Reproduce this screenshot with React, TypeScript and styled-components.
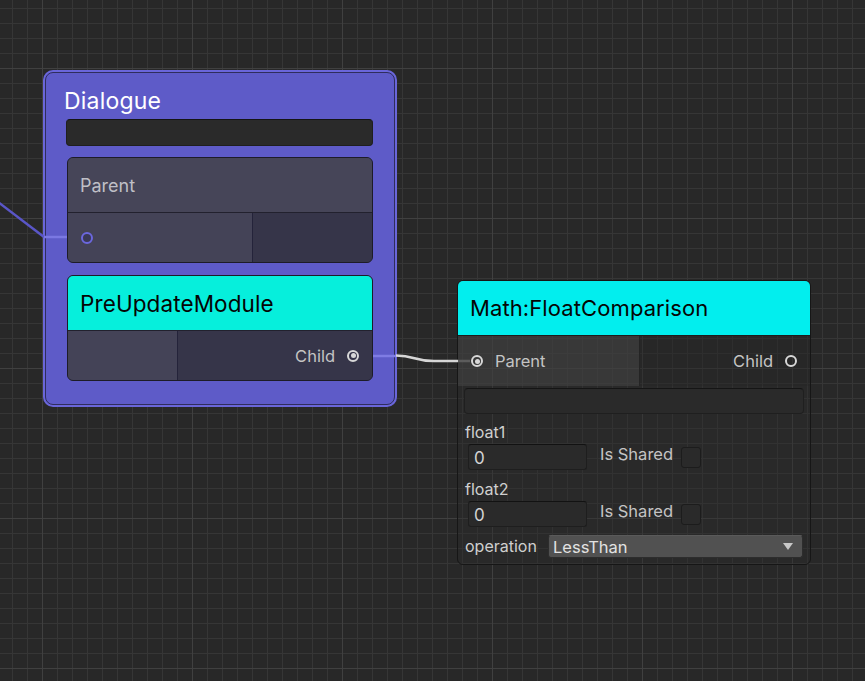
import React from "react";
import styled, { createGlobalStyle, css } from "styled-components";

const GlobalStyle = createGlobalStyle`
  html, body { margin: 0; padding: 0; background: #282828; }
  body { font-family: Inter, "Noto Sans", "Liberation Sans", sans-serif; }
  * { box-sizing: border-box; }
`;

const Canvas = styled.div`
  position: relative;
  width: 865px;
  height: 681px;
  overflow: hidden;
  background-color: #282828;
  background-image:
    linear-gradient(to right, #404040 1px, transparent 1px),
    linear-gradient(to bottom, #404040 1px, transparent 1px),
    linear-gradient(to right, #363636 1px, transparent 1px),
    linear-gradient(to bottom, #363636 1px, transparent 1px);
  background-size: 150px 150px, 150px 150px, 15px 15px, 15px 15px;
  background-position: 42px 0, 0 68px, 12px 0, 0 8px;
`;

const EdgeLayer = styled.svg`
  position: absolute;
  left: 0;
  top: 0;
  width: 865px;
  height: 681px;
  pointer-events: none;
  z-index: 3;
`;

/* ---------- Dialogue group node ---------- */

const GroupNode = styled.div`
  position: absolute;
  left: 45px;
  top: 72px;
  width: 350px;
  height: 333px;
  border: 1px solid #2f2d5c;
  border-radius: 8px;
  box-shadow: 0 0 0 2px #6a66da;
  background: #5e5bc8;
  padding: 15px 21px 0 20px;
  display: flex;
  flex-direction: column;
  z-index: 1;
`;

const GroupTitle = styled.div`
  font-size: 23px;
  line-height: 26px;
  color: #ffffff;
  margin-left: -2px;
  letter-spacing: 0.2px;
`;

const TextField = styled.div<{ $height: number }>`
  height: ${(p) => p.$height}px;
  background: #2a2a2a;
  border: 1px solid #1f1f1f;
  border-top-color: #151515;
  border-radius: 4px;
`;

const PortBlock = styled.div<{ $gap: number }>`
  margin-top: ${(p) => p.$gap}px;
  margin-left: 1px;
  height: 106px;
  border: 1px solid #1d1c28;
  border-radius: 6px;
  overflow: hidden;
  display: flex;
  flex-direction: column;
  background: #363549;
`;

const BlockHeader = styled.div<{ $accent?: boolean }>`
  height: 55px;
  flex: none;
  display: flex;
  align-items: center;
  padding-left: 12px;
  border-bottom: 1px solid #22212e;
  ${(p) =>
    p.$accent
      ? css`
          background: #06efdc;
          color: #050505;
          font-size: 22.5px;
          letter-spacing: 0.1px;
        `
      : css`
          background: #464558;
          color: #bfbfc6;
          font-size: 18px;
        `}
`;

const BlockRow = styled.div`
  flex: 1;
  display: flex;
`;

const BlockCell = styled.div<{ $width?: number; $light?: boolean }>`
  ${(p) => (p.$width ? `width: ${p.$width}px; flex: none;` : "flex: 1;")}
  background: ${(p) => (p.$light ? "#444357" : "#363549")};
  border-right: ${(p) => (p.$width ? "1px solid #24233a" : "none")};
  display: flex;
  align-items: center;
  padding: 0 13px;
  gap: 12px;
`;

const RightCell = styled(BlockCell)`
  justify-content: flex-end;
`;

type PortKind = "purple" | "filled" | "hollow";

const Port = styled.span<{ $kind: PortKind }>`
  position: relative;
  flex: none;
  width: 12px;
  height: 12px;
  border-radius: 50%;
  border: 2px solid
    ${(p) => (p.$kind === "purple" ? "#6b67de" : "#d8d8d8")};
  background: ${(p) => (p.$kind === "purple" ? "#3a3956" : "transparent")};
  ${(p) =>
    p.$kind === "filled" &&
    css`
      &::after {
        content: "";
        position: absolute;
        left: 1.5px;
        top: 1.5px;
        width: 5px;
        height: 5px;
        border-radius: 50%;
        background: #d8d8d8;
      }
    `}
`;

const PortLabel = styled.span`
  font-size: 16.5px;
  color: #c4c4c4;
  line-height: 20px;
`;

/* ---------- Math node ---------- */

const MathNode = styled.div`
  position: absolute;
  left: 457px;
  top: 280px;
  width: 354px;
  height: 285px;
  border: 1px solid #161616;
  border-radius: 6px;
  overflow: hidden;
  display: flex;
  flex-direction: column;
  background: rgba(44, 44, 44, 0.35);
  z-index: 1;
`;

const MathHeader = styled.div`
  height: 55px;
  flex: none;
  background: #02eeee;
  border-bottom: 1px solid #1c1c1c;
  display: flex;
  align-items: center;
  padding-left: 12px;
  font-size: 22px;
  color: #050505;
  letter-spacing: 0.1px;
`;

const PortRow = styled.div`
  height: 50px;
  flex: none;
  display: flex;
`;

const PortCell = styled.div<{ $side: "in" | "out" }>`
  display: flex;
  align-items: center;
  gap: 12px;
  ${(p) =>
    p.$side === "in"
      ? css`
          width: 182px;
          flex: none;
          padding-left: 13px;
          background: rgba(70, 70, 70, 0.55);
          border-right: 1px solid #242424;
        `
      : css`
          flex: 1;
          justify-content: flex-end;
          padding-right: 13px;
          background: rgba(36, 36, 36, 0.25);
        `}
`;

const Body = styled.div`
  flex: 1;
  padding: 2px 6px 0 6px;
  display: flex;
  flex-direction: column;
`;

const FieldLabel = styled.div<{ $top: number }>`
  margin-top: ${(p) => p.$top}px;
  padding-left: 1px;
  font-size: 16px;
  line-height: 18px;
  color: #d0d0d0;
`;

const InlineRow = styled.div`
  margin-top: 3px;
  display: flex;
  align-items: center;
  padding-left: 4px;
`;

const NumberInput = styled.div`
  width: 119px;
  height: 26px;
  background: #2a2a2a;
  border: 1px solid #1e1e1e;
  border-top-color: #121212;
  border-radius: 3px;
  font-size: 17px;
  color: #d4d4d4;
  padding: 3px 0 0 5px;
  line-height: 20px;
`;

const ToggleLabel = styled.span`
  margin-left: 13px;
  font-size: 16.5px;
  color: #c4c4c4;
  line-height: 20px;
  margin-top: -6px;
`;

const Checkbox = styled.span`
  margin-left: 8px;
  width: 20px;
  height: 21px;
  background: #2a2a2a;
  border: 1px solid #1c1c1c;
  border-radius: 3px;
`;

const EnumRow = styled.div`
  margin-top: 8px;
  display: flex;
  align-items: center;
  padding-left: 1px;
`;

const EnumLabel = styled.span`
  width: 83px;
  flex: none;
  font-size: 16px;
  color: #cfcfcf;
  line-height: 20px;
  margin-top: -2px;
`;

const Dropdown = styled.div`
  flex: 1;
  margin-right: 1px;
  height: 23px;
  background: #515151;
  border: 1px solid #2d2d2d;
  border-top-color: #5a5a5a;
  border-radius: 3px;
  display: flex;
  align-items: center;
  justify-content: space-between;
  padding: 0 9px 0 4px;
  font-size: 16.5px;
  color: #e2e2e2;
`;

const Caret = styled.svg`
  width: 10px;
  height: 7px;
`;

export default function App() {
  return (
    <>
      <GlobalStyle />
      <Canvas>
        <GroupNode>
          <GroupTitle>Dialogue</GroupTitle>
          <TextField $height={27} style={{ marginTop: 5 }} />
          <PortBlock $gap={11}>
            <BlockHeader>Parent</BlockHeader>
            <BlockRow>
              <BlockCell $width={185} $light>
                <Port $kind="purple" />
              </BlockCell>
              <BlockCell />
            </BlockRow>
          </PortBlock>
          <PortBlock $gap={12}>
            <BlockHeader $accent>PreUpdateModule</BlockHeader>
            <BlockRow>
              <BlockCell $width={110} $light />
              <RightCell>
                <PortLabel>Child</PortLabel>
                <Port $kind="filled" />
              </RightCell>
            </BlockRow>
          </PortBlock>
        </GroupNode>

        <MathNode>
          <MathHeader>Math:FloatComparison</MathHeader>
          <PortRow>
            <PortCell $side="in">
              <Port $kind="filled" />
              <PortLabel>Parent</PortLabel>
            </PortCell>
            <PortCell $side="out">
              <PortLabel>Child</PortLabel>
              <Port $kind="hollow" />
            </PortCell>
          </PortRow>
          <Body>
            <TextField $height={26} />
            <FieldLabel $top={9}>float1</FieldLabel>
            <InlineRow>
              <NumberInput>0</NumberInput>
              <ToggleLabel>Is Shared</ToggleLabel>
              <Checkbox />
            </InlineRow>
            <FieldLabel $top={10}>float2</FieldLabel>
            <InlineRow>
              <NumberInput>0</NumberInput>
              <ToggleLabel>Is Shared</ToggleLabel>
              <Checkbox />
            </InlineRow>
            <EnumRow>
              <EnumLabel>operation</EnumLabel>
              <Dropdown>
                <span>LessThan</span>
                <Caret viewBox="0 0 10 7">
                  <path d="M0 0 L10 0 L5 7 Z" fill="#c8c8c8" />
                </Caret>
              </Dropdown>
            </EnumRow>
          </Body>
        </MathNode>

        <EdgeLayer viewBox="0 0 865 681">
          <path d="M -2 202 L 44 237" stroke="#5a56c8" strokeWidth="2.5" fill="none" />
          <path d="M 44 237 L 67 237" stroke="#7b78e2" strokeWidth="2.5" fill="none" />
          <path d="M 373 356 L 396 356" stroke="#7f7ce4" strokeWidth="2.5" fill="none" />
          <path
            d="M 396 355.5 C 415 355.5 414 361 434 361 L 458 361"
            stroke="#d6d6d6"
            strokeWidth="2.5"
            fill="none"
          />
          <path d="M 458 361 L 470 361" stroke="#5c5c5c" strokeWidth="2.5" fill="none" />
        </EdgeLayer>
      </Canvas>
    </>
  );
}
